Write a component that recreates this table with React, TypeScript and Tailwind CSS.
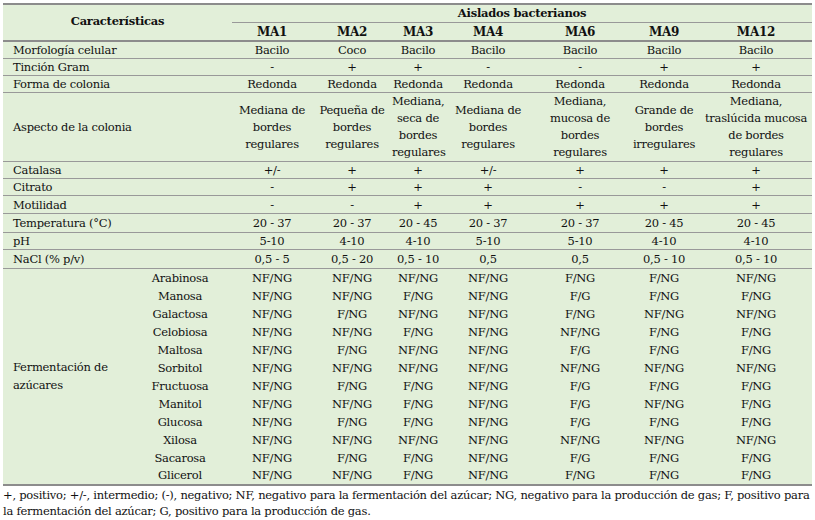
import React from 'react'

const isolates = ['MA1', 'MA2', 'MA3', 'MA4', 'MA6', 'MA9', 'MA12']
const widths = [117, 112, 80, 80, 52, 88, 96, 72, 112]

const simpleRows: [string, string[]][] = [
  ['Morfología celular', ['Bacilo', 'Coco', 'Bacilo', 'Bacilo', 'Bacilo', 'Bacilo', 'Bacilo']],
  ['Tinción Gram', ['-', '+', '+', '-', '-', '+', '+']],
  ['Forma de colonia', ['Redonda', 'Redonda', 'Redonda', 'Redonda', 'Redonda', 'Redonda', 'Redonda']],
]

const aspect = [
  ['Mediana de', 'bordes', 'regulares'],
  ['Pequeña de', 'bordes', 'regulares'],
  ['Mediana,', 'seca de', 'bordes', 'regulares'],
  ['Mediana de', 'bordes', 'regulares'],
  ['Mediana,', 'mucosa de', 'bordes', 'regulares'],
  ['Grande de', 'bordes', 'irregulares'],
  ['Mediana,', 'traslúcida mucosa', 'de bordes', 'regulares'],
]

// label, values, cell height
const testRows: [string, string[], string][] = [
  ['Catalasa', ['+/-', '+', '+', '+/-', '+', '+', '+'], 'h-[17px]'],
  ['Citrato', ['-', '+', '+', '+', '-', '-', '+'], 'h-[17px]'],
  ['Motilidad', ['-', '-', '+', '+', '+', '+', '+'], 'h-[18px]'],
  ['Temperatura (°C)', ['20 - 37', '20 - 37', '20 - 45', '20 - 37', '20 - 37', '20 - 45', '20 - 45'], 'h-[19px]'],
  ['pH', ['5-10', '4-10', '4-10', '5-10', '5-10', '4-10', '4-10'], 'h-[17px]'],
  ['NaCl (% p/v)', ['0,5 - 5', '0,5 - 20', '0,5 - 10', '0,5', '0,5', '0,5 - 10', '0,5 - 10'], 'h-[19px]'],
]

const N = 'NF/NG'
const sugars: [string, string[]][] = [
  ['Arabinosa', [N, N, N, N, 'F/NG', 'F/NG', N]],
  ['Manosa', [N, N, 'F/NG', N, 'F/G', 'F/NG', 'F/NG']],
  ['Galactosa', [N, 'F/NG', N, N, 'F/NG', N, N]],
  ['Celobiosa', [N, N, 'F/NG', N, N, 'F/NG', 'F/NG']],
  ['Maltosa', [N, 'F/NG', N, N, 'F/G', 'F/NG', 'F/NG']],
  ['Sorbitol', [N, N, N, N, N, N, N]],
  ['Fructuosa', [N, 'F/NG', 'F/NG', N, 'F/G', 'F/NG', 'F/NG']],
  ['Manitol', [N, N, 'F/NG', N, 'F/G', N, 'F/NG']],
  ['Glucosa', [N, 'F/NG', 'F/NG', N, 'F/G', 'F/NG', 'F/NG']],
  ['Xilosa', [N, N, N, N, N, N, N]],
  ['Sacarosa', [N, 'F/NG', 'F/NG', N, 'F/G', 'F/NG', 'F/NG']],
  ['Glicerol', [N, N, 'F/NG', N, 'F/NG', 'F/NG', 'F/NG']],
]

function ValueRow({ label, values, h }: { label: string; values: string[]; h: string }) {
  return (
    <tr className="border-b border-[#999]">
      <td colSpan={2} className={`${h} pl-[10px] text-left`}>{label}</td>
      {values.map((v, i) => (
        <td key={i} className="text-center">{v}</td>
      ))}
    </tr>
  )
}

export default function App() {
  return (
    <div className="w-[815px] h-[520px] bg-white pt-[3px] pl-[3px] font-['DejaVu_Serif',serif] text-[11.5px] tracking-[-0.25px] text-[#111]">
      <table className="table-fixed border-collapse bg-[#e2efd9] w-[809px]">
        <colgroup>
          {widths.map((w, i) => (
            <col key={i} style={{ width: w }} />
          ))}
        </colgroup>
        <tbody className="leading-[16px]">
          <tr className="border-t-2 border-[#8c8c8c]">
            <td colSpan={2} rowSpan={2} className="text-center align-middle font-bold pb-[3px]">
              Características
            </td>
            <td colSpan={7} className="h-[18px] text-center font-bold border-b border-[#999]">
              Aislados bacterianos
            </td>
          </tr>
          <tr className="border-b-2 border-[#8c8c8c]">
            {isolates.map(m => (
              <td key={m} className="h-[19px] text-center font-bold text-[12px] align-bottom">{m}</td>
            ))}
          </tr>
          {simpleRows.map(([l, v]) => (
            <ValueRow key={l} label={l} values={v} h="h-[16px]" />
          ))}
          <tr className="border-b border-[#999]">
            <td colSpan={2} className="h-[68px] pl-[10px] align-middle">Aspecto de la colonia</td>
            {aspect.map((lines, i) => (
              <td key={i} className="text-center align-middle leading-[17px] whitespace-nowrap">
                {lines.map((t, j) => (
                  <div key={j}>{t}</div>
                ))}
              </td>
            ))}
          </tr>
          {testRows.map(([l, v, h]) => (
            <ValueRow key={l} label={l} values={v} h={h} />
          ))}
          {sugars.map(([name, v], idx) => {
            const first = idx === 0
            const last = idx === sugars.length - 1
            return (
              <tr key={name} className={last ? 'border-b-2 border-[#8c8c8c]' : ''}>
                {first && (
                  <td rowSpan={sugars.length} className="pl-[10px] align-middle leading-[18px]">
                    Fermentación de
                    <br />
                    azúcares
                  </td>
                )}
                <td className="h-[18px] text-center pl-[8px]">{name}</td>
                {v.map((x, i) => (
                  <td key={i} className="h-[18px] text-center">{x}</td>
                ))}
              </tr>
            )
          })}
        </tbody>
      </table>
      <p className="leading-[16px] mt-[1px] whitespace-nowrap">
        +, positivo; +/-, intermedio; (-), negativo; NF, negativo para la fermentación del azúcar; NG, negativo para la producción de gas; F, positivo para
        <br />
        la fermentación del azúcar; G, positivo para la producción de gas.
      </p>
    </div>
  )
}
